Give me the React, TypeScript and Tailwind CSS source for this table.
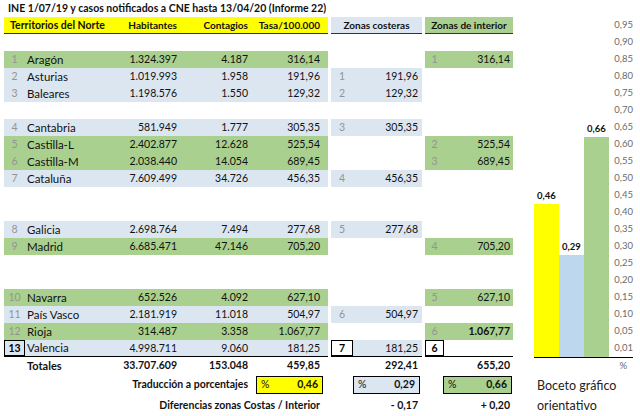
import React from 'react';

type Band = 'g' | 'b';

interface Row {
  n?: string;
  name?: string;
  hab?: string;
  cont?: string;
  tasa?: string;
  band?: Band;
  cn?: string;
  cv?: string;
  inN?: string;
  inV?: string;
  inBold?: boolean;
  last?: boolean;
}

const rows: Row[] = [
  {},
  { n: '1', name: 'Aragón', hab: '1.324.397', cont: '4.187', tasa: '316,14', band: 'g', inN: '1', inV: '316,14' },
  { n: '2', name: 'Asturias', hab: '1.019.993', cont: '1.958', tasa: '191,96', band: 'b', cn: '1', cv: '191,96' },
  { n: '3', name: 'Baleares', hab: '1.198.576', cont: '1.550', tasa: '129,32', band: 'b', cn: '2', cv: '129,32' },
  {},
  { n: '4', name: 'Cantabria', hab: '581.949', cont: '1.777', tasa: '305,35', band: 'b', cn: '3', cv: '305,35' },
  { n: '5', name: 'Castilla-L', hab: '2.402.877', cont: '12.628', tasa: '525,54', band: 'g', inN: '2', inV: '525,54' },
  { n: '6', name: 'Castilla-M', hab: '2.038.440', cont: '14.054', tasa: '689,45', band: 'g', inN: '3', inV: '689,45' },
  { n: '7', name: 'Cataluña', hab: '7.609.499', cont: '34.726', tasa: '456,35', band: 'b', cn: '4', cv: '456,35' },
  {},
  {},
  { n: '8', name: 'Galicia', hab: '2.698.764', cont: '7.494', tasa: '277,68', band: 'b', cn: '5', cv: '277,68' },
  { n: '9', name: 'Madrid', hab: '6.685.471', cont: '47.146', tasa: '705,20', band: 'g', inN: '4', inV: '705,20' },
  {},
  {},
  { n: '10', name: 'Navarra', hab: '652.526', cont: '4.092', tasa: '627,10', band: 'g', inN: '5', inV: '627,10' },
  { n: '11', name: 'País Vasco', hab: '2.181.919', cont: '11.018', tasa: '504,97', band: 'b', cn: '6', cv: '504,97' },
  { n: '12', name: 'Rioja', hab: '314.487', cont: '3.358', tasa: '1.067,77', band: 'g', inN: '6', inV: '1.067,77', inBold: true },
  { n: '13', name: 'Valencia', hab: '4.998.711', cont: '9.060', tasa: '181,25', band: 'b', cn: '7', cv: '181,25', inN: '6', last: true },
];

const axis = ['0,95', '0,90', '0,85', '0,80', '0,75', '0,70', '0,65', '0,60', '0,55', '0,50', '0,45', '0,40', '0,35', '0,30', '0,25', '0,20', '0,15', '0,10', '0,05', '0,01'];

const bandBg = (b?: Band) => (b === 'g' ? 'bg-[#a9d08e]' : b === 'b' ? 'bg-[#dce6f1]' : '');

function DataRow({ r }: { r: Row }) {
  // last row has boxed index cells and the bottom rule
  const rule = r.last ? 'border-b border-black' : '';
  return (
    <div className="flex h-[17px] text-[10.5px] leading-none">
      <div className={`ml-[4px] flex w-[324px] items-center ${bandBg(r.band)} ${rule}`}>
        <span
          className={`flex h-full w-[21px] items-center justify-center ${
            r.last ? 'border border-black font-bold text-black' : 'text-[#949494]'
          }`}
        >
          {r.n}
        </span>
        <span className="w-[82px] pl-[2px] text-[11.5px]">{r.name}</span>
        <span className="w-[73px] pr-[3px] text-right">{r.hab}</span>
        <span className="w-[71px] pr-[3px] text-right">{r.cont}</span>
        <span className="w-[77px] pr-[8px] text-right">{r.tasa}</span>
      </div>
      <div className={`ml-[3px] flex w-[91px] items-center ${r.cn ? 'bg-[#dce6f1]' : ''} ${rule}`}>
        <span
          className={`flex h-full w-[22px] items-center justify-center ${
            r.last ? 'border border-black bg-white font-bold text-black' : 'text-[#949494]'
          }`}
        >
          {r.cn}
        </span>
        <span className="flex-1 pr-[4px] text-right">{r.cv}</span>
      </div>
      <div className={`ml-[3px] flex w-[88px] items-center ${r.inV ? 'bg-[#a9d08e]' : ''} ${rule}`}>
        <span
          className={`flex h-full w-[19px] items-center justify-center ${
            r.last ? 'border border-black font-bold text-black' : 'text-[#949494]'
          }`}
        >
          {r.inN}
        </span>
        <span className={`flex-1 pr-[3px] text-right ${r.inBold ? 'font-bold' : ''}`}>{r.inV}</span>
      </div>
    </div>
  );
}

function PctBox({ value, bg, className }: { value: string; bg: string; className: string }) {
  return (
    <div className={`flex h-[18px] items-center justify-between border border-black px-[4px] font-bold ${bg} ${className}`}>
      <span className="font-normal">%</span>
      <span>{value}</span>
    </div>
  );
}

function Table() {
  return (
    <div className="w-[513px] shrink-0">
      <div className="flex h-[17px] items-center pl-[8px] text-[10.5px] font-bold">
        INE 1/07/19 y casos notificados a CNE hasta 13/04/20 (Informe 22)
      </div>

      <div className="flex h-[17px] text-[10px] font-bold leading-none">
        <div className="ml-[4px] flex w-[324px] items-center border-b border-[#333] bg-[#ffff00]">
          <span className="w-[103px] pl-[6px] text-[10.5px]">Territorios del Norte</span>
          <span className="w-[73px] pr-[3px] text-right">Habitantes</span>
          <span className="w-[71px] pr-[3px] text-right">Contagios</span>
          <span className="w-[77px] pr-[8px] text-right">Tasa/100.000</span>
        </div>
        <div className="ml-[3px] flex w-[91px] items-center justify-center border-b border-[#333] bg-[#dce6f1]">
          Zonas costeras
        </div>
        <div className="ml-[3px] flex w-[88px] items-center justify-center border-b border-[#333] bg-[#a9d08e]">
          Zonas de interior
        </div>
      </div>

      {rows.map((r, i) => (
        <DataRow key={i} r={r} />
      ))}

      <div className="flex h-[17px] items-center text-[10.5px] font-bold leading-none">
        <span className="ml-[27px] w-[80px] text-[11px]">Totales</span>
        <span className="w-[73px] pr-[3px] text-right">33.707.609</span>
        <span className="w-[71px] pr-[3px] text-right">153.048</span>
        <span className="w-[77px] pr-[8px] text-right">459,85</span>
        <span className="ml-[3px] w-[91px] pr-[4px] text-right">292,41</span>
        <span className="ml-[3px] w-[88px] pr-[3px] text-right">655,20</span>
      </div>

      <div className="flex h-[21px] items-center text-[10.5px] font-bold leading-none">
        <span className="ml-[4px] w-[247px] pr-[3px] text-right">Traducción a porcentajes</span>
        <PctBox value="0,46" bg="bg-[#ffff00]" className="ml-[5px] w-[67px]" />
        <PctBox value="0,29" bg="bg-[#dce6f1]" className="ml-[30px] w-[67px]" />
        <PctBox value="0,66" bg="bg-[#a9d08e]" className="ml-[23px] w-[69px]" />
      </div>

      <div className="flex h-[21px] items-center text-[10.5px] font-bold leading-none">
        <span className="ml-[4px] w-[324px] pr-[8px] text-right">Diferencias zonas Costas / Interior</span>
        <span className="ml-[3px] w-[91px] pr-[4px] text-right">- 0,17</span>
        <span className="ml-[3px] w-[88px] pr-[3px] text-right">+ 0,20</span>
      </div>
    </div>
  );
}

function Bar({ value, h, bg }: { value: string; h: number; bg: string }) {
  return (
    <div className="flex w-[25px] flex-col items-center justify-end">
      <span className="mb-[3px] text-[9.5px] font-bold leading-none">{value}</span>
      <div className={`w-full ${bg}`} style={{ height: h }} />
    </div>
  );
}

function Chart() {
  return (
    <div className="ml-[21px] flex w-[106px] flex-col">
      <div className="h-[17px]" />
      <div className="flex h-[341px] w-[99px] border-b border-black">
        <div className="flex h-full items-end">
          <Bar value="0,46" h={153} bg="bg-[#ffff00]" />
          <Bar value="0,29" h={102} bg="bg-[#bdd7ee]" />
          <Bar value="0,66" h={220} bg="bg-[#a9d08e]" />
        </div>
        <div className="flex flex-1 flex-col">
          {axis.map((a) => (
            <span key={a} className="flex h-[17px] items-center justify-end text-[9.5px] leading-none text-[#6b6b6b]">
              {a}
            </span>
          ))}
        </div>
      </div>
      <div className="flex h-[17px] w-[99px] items-center justify-end pr-[6px] text-[9.5px] text-[#6b6b6b]">%</div>
      <div className="pl-[3px] pt-[2px] text-[12.5px] leading-[20px] text-[#222]">
        Boceto gráfico
        <br />
        orientativo
      </div>
    </div>
  );
}

export default function App() {
  return (
    <div className="flex h-[416px] w-[640px] overflow-hidden bg-white font-['Lato',sans-serif] text-[#111]">
      <Table />
      <Chart />
    </div>
  );
}
